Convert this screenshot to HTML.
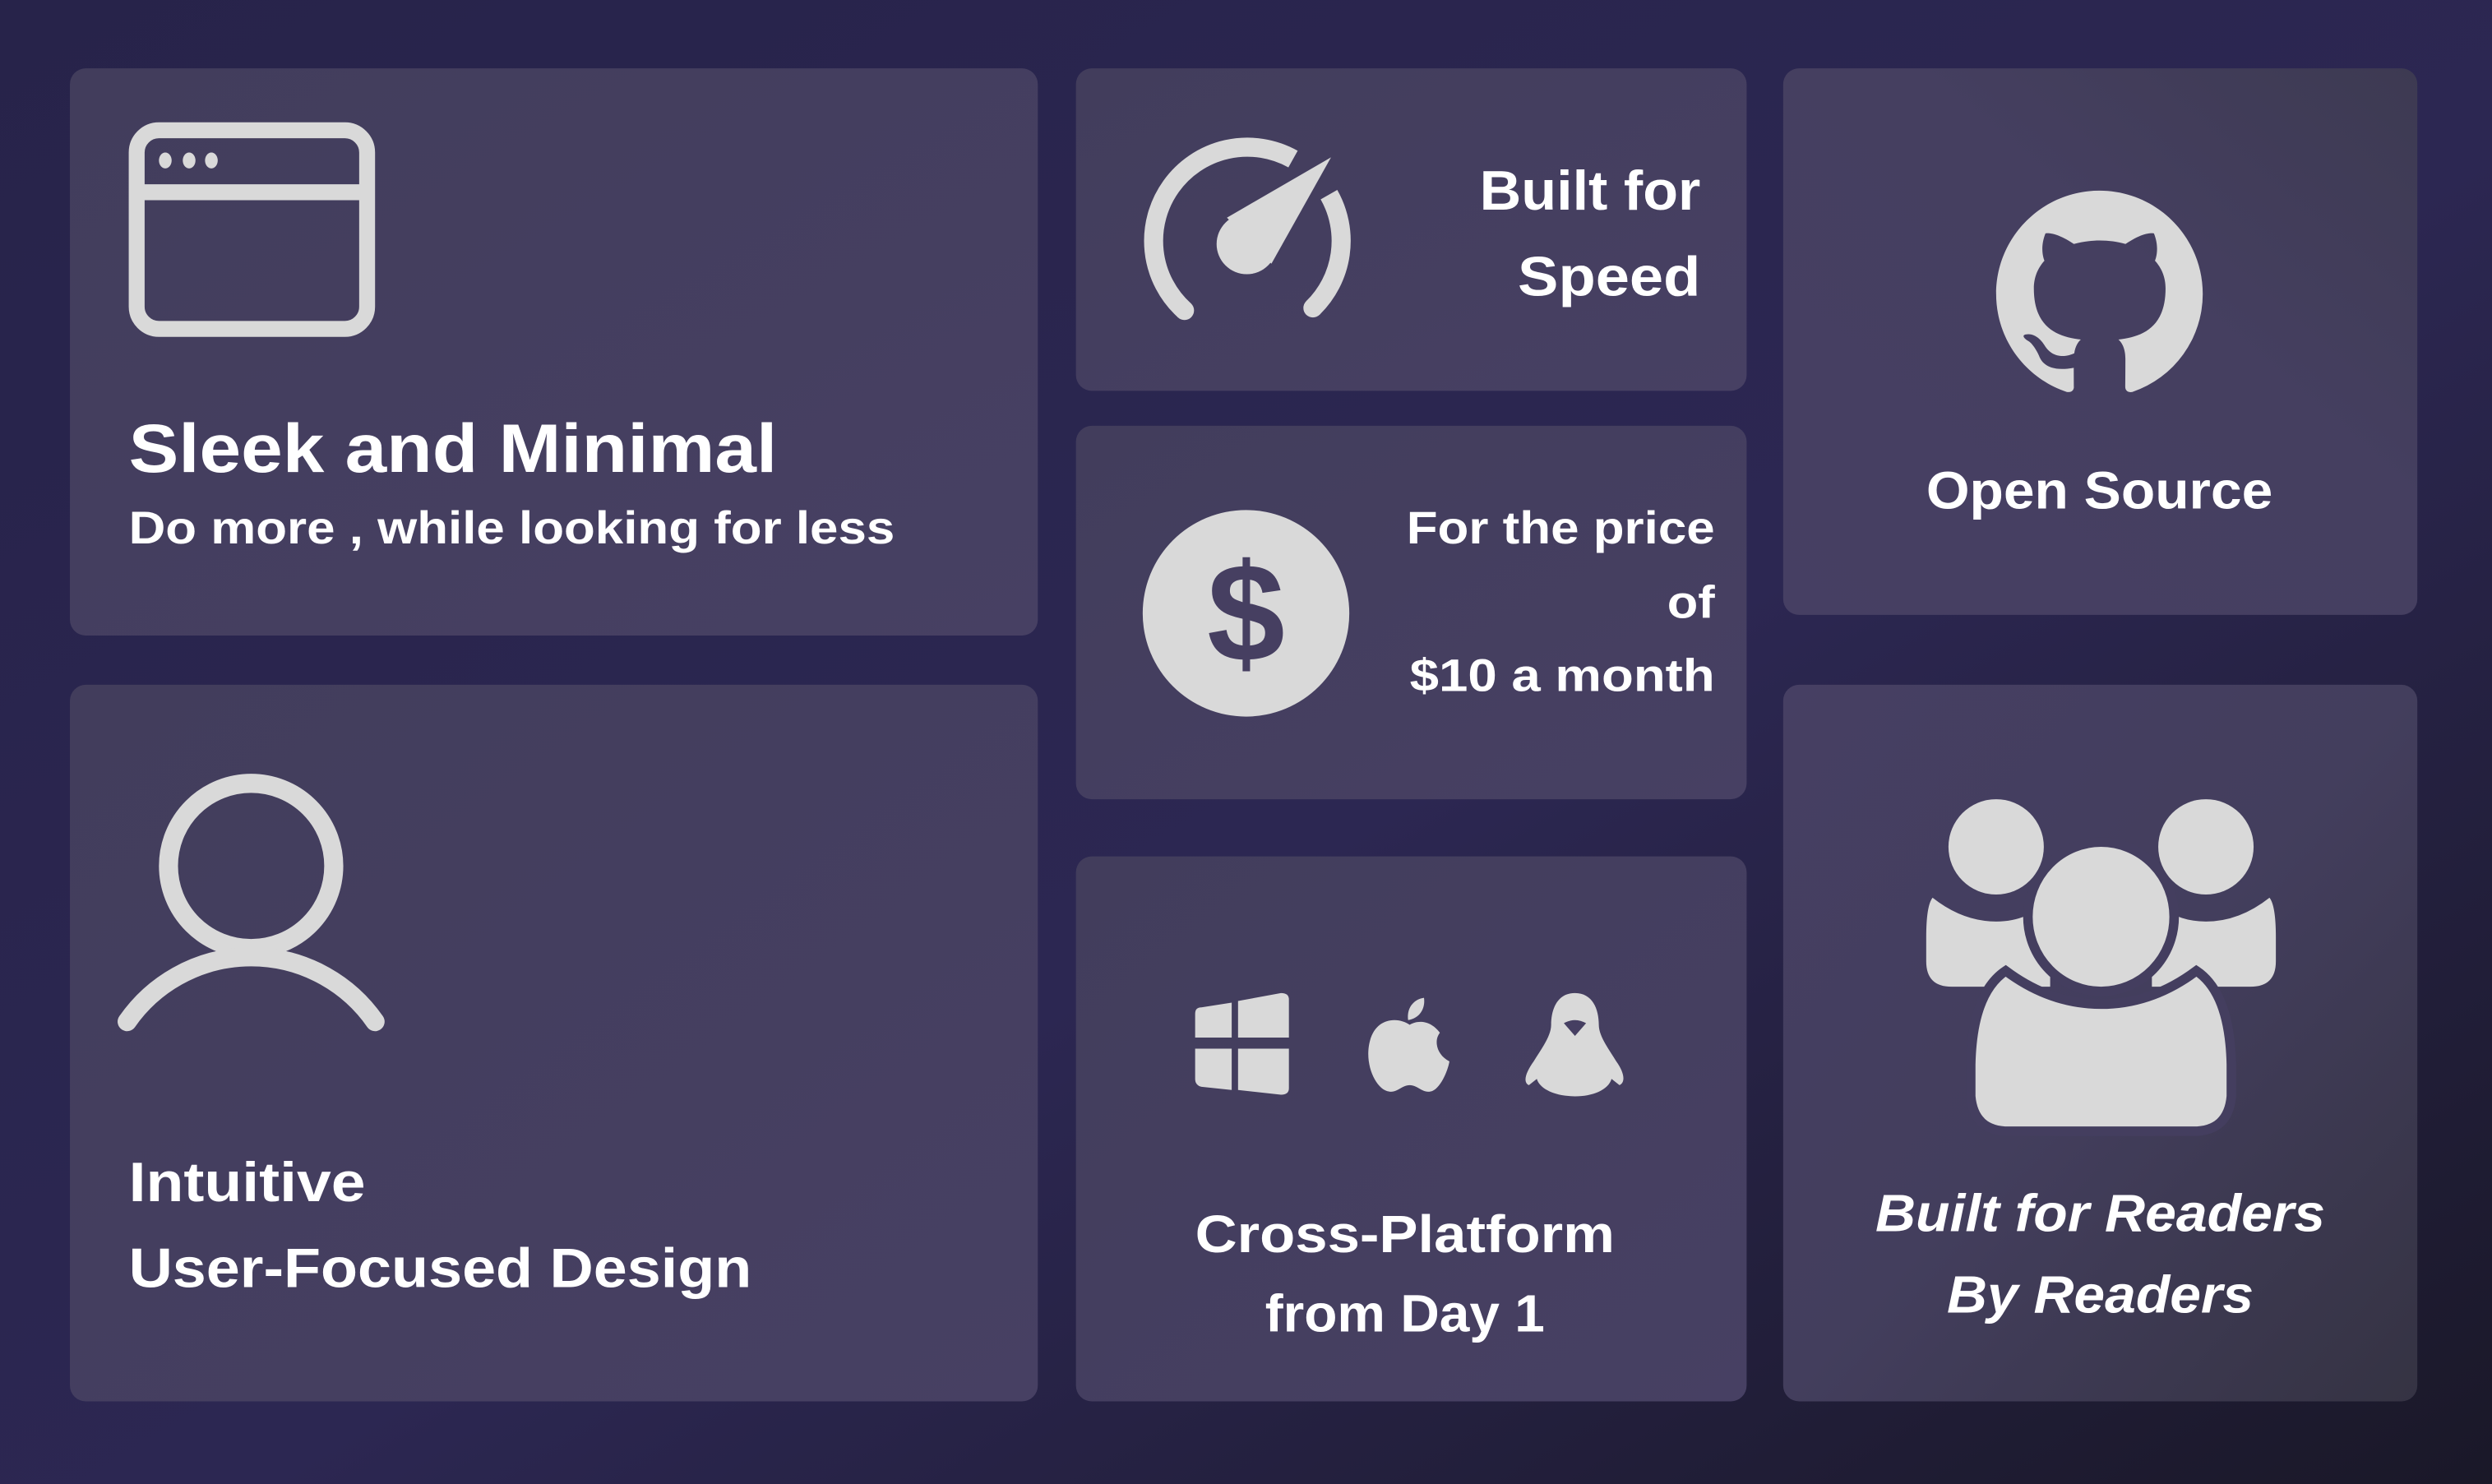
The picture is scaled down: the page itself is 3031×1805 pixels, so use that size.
<!DOCTYPE html>
<html><head><meta charset="utf-8"><style>
html,body{margin:0;padding:0;width:3031px;height:1805px;overflow:hidden;background:#2a2550}
svg{display:block}
text{font-family:"Liberation Sans",sans-serif;font-weight:bold;fill:#fff}
</style></head><body>
<svg width="3031" height="1805" viewBox="0 0 1568 934" preserveAspectRatio="none" xmlns="http://www.w3.org/2000/svg">
<defs>
<linearGradient id="bg" x1="0" y1="0" x2="1" y2="1">
<stop offset="0" stop-color="#27234a"/><stop offset="0.55" stop-color="#2c2752"/><stop offset="1" stop-color="#1a1828"/>
</linearGradient>
<linearGradient id="c" x1="0" y1="0" x2="1" y2="1">
<stop offset="0" stop-color="#423d5c"/><stop offset="1" stop-color="#474063"/>
</linearGradient>
<linearGradient id="c4" x1="0" y1="1" x2="1" y2="0">
<stop offset="0" stop-color="#463f63"/><stop offset="0.6" stop-color="#453f60"/><stop offset="1" stop-color="#3d3a52"/>
</linearGradient>
<linearGradient id="c7" x1="0" y1="0" x2="1" y2="1">
<stop offset="0" stop-color="#463f63"/><stop offset="0.5" stop-color="#433e5d"/><stop offset="1" stop-color="#353343"/>
</linearGradient>
</defs>
<rect width="1568" height="934" fill="url(#bg)"/>
<rect x="44" y="43" width="609" height="357" rx="10" fill="url(#c)"/>
<rect x="677" y="43" width="422" height="203" rx="10" fill="url(#c)"/>
<rect x="677" y="268" width="422" height="235" rx="10" fill="url(#c)"/>
<rect x="1122" y="43" width="399" height="344" rx="10" fill="url(#c4)"/>
<rect x="44" y="431" width="609" height="451" rx="10" fill="url(#c)"/>
<rect x="677" y="539" width="422" height="343" rx="10" fill="url(#c)"/>
<rect x="1122" y="431" width="399" height="451" rx="10" fill="url(#c7)"/>

<!-- browser icon -->
<g fill="none" stroke="#d9d9d9" stroke-width="10">
<rect x="86" y="82" width="145" height="125" rx="14"/>
<line x1="86" y1="121" x2="231" y2="121"/>
</g>
<g fill="#d9d9d9"><ellipse cx="104" cy="101" rx="4" ry="5"/><ellipse cx="119" cy="101" rx="4" ry="5"/><ellipse cx="133" cy="101" rx="4" ry="5"/></g>

<!-- speedometer -->
<g fill="none" stroke="#d9d9d9" stroke-width="12">
<path d="M745.3 195.4 A59 59 0 0 1 813.6 100.1"/>
<path d="M836.2 122.5 A59 59 0 0 1 826.1 193.8"/>
</g>
<g fill="#d9d9d9">
<circle cx="745.3" cy="195.4" r="6"/>
<circle cx="826.1" cy="193.8" r="6"/>
<circle cx="784.5" cy="153.6" r="19"/>
<path d="M772 137 L837.5 99 L800 166 Z"/>
</g>

<!-- dollar -->
<circle cx="784" cy="386" r="65" fill="#d9d9d9"/>
<text x="784" y="416" font-size="88" text-anchor="middle" style="fill:#463f61">$</text>

<!-- github -->
<g transform="translate(1256 120) scale(8.125)">
<path fill="#d9d9d9" fill-rule="evenodd" d="M8 0C3.58 0 0 3.58 0 8c0 3.54 2.29 6.53 5.47 7.590.4.07.55-.17.55-.38 0-.19-.01-.82-.01-1.49-2.01.37-2.53-.49-2.690-.94-.09-.23-.48-.94-.82-1.130-.28-.15-.68-.52-.01-.53.63-.01 1.08.58 1.23.82.72 1.21 1.870.87 2.33.66.07-.52.28-.87.51-1.07-1.78-.2-3.640-.89-3.640-3.95 0-.87.31-1.59.82-2.15-.08-.2-.36-1.02.08-2.12 0 0 .67-.21 2.2.82.64-.18 1.32-.27 2-.27.68 0 1.36.09 2 .27 1.53-1.04 2.2-.82 2.2-.82.44 1.1.16 1.92.08 2.12.51.56.82 1.27.82 2.15 0 3.07-1.87 3.75-3.65 3.95.29.25.54.73.54 1.48 0 1.07-.01 1.93-.01 2.2 0 .21.15.46.55.38A8.013 8.013 0 0016 8c0-4.42-3.58-8-8-8z"/>
</g>

<!-- user -->
<g fill="none" stroke="#d9d9d9" stroke-width="12" stroke-linecap="round">
<circle cx="158" cy="545" r="52"/>
<path d="M80 643 A95 95 0 0 1 236 643"/>
</g>

<!-- windows -->
<g fill="#d9d9d9">
<path d="M752 638 Q752 634 756 634 L775 631 L775 653 L752 653 Z"/>
<path d="M779 630 L806 625 Q811 625 811 629 L811 653 L779 653 Z"/>
<path d="M752 660 L775 660 L775 686 L756 684 Q752 683 752 679 Z"/>
<path d="M779 660 L811 660 L811 685 Q811 689 806 689 L779 686 Z"/>
</g>
<!-- apple -->
<g fill="#d9d9d9">
<path d="M887 645 C880 640 866 640 862 655 C858 670 866 686 874 687 C879 688 882 683 887 683 C892 683 895 688 900 687 C906 686 911 674 912 668 C904 664 902 655 906 650 C900 642 892 642 887 645 Z"/>
<path d="M886 642 C885 635 889 629 896 628 C897 635 893 641 886 642 Z"/>
</g>
<!-- penguin -->
<g>
<path fill="#d9d9d9" d="M991 625 C980 625 976 635 976 645 C976 652 970 660 965 668 C960 675 958 681 962 683 L967 679 C969 686 980 690 991 690 C1002 690 1012 686 1014 679 L1019 683 C1023 681 1022 675 1017 668 C1012 660 1006 652 1006 645 C1006 635 1002 625 991 625 Z"/>
<path fill="#463f62" d="M984 644 Q991 640 998 644 L991 652 Z"/>
</g>

<!-- readers group -->
<g fill="#d9d9d9" stroke="#443e5f" stroke-width="6">
<path d="M1216 565 Q1235 580 1256 580 Q1277 580 1290 565 L1290 621 L1228 621 Q1212 621 1212 605 L1212 590 Q1212 570 1216 565 Z" stroke="none"/>
<path d="M1428 565 Q1409 580 1388 580 Q1367 580 1354 565 L1354 621 L1416 621 Q1432 621 1432 605 L1432 590 Q1432 570 1428 565 Z" stroke="none"/>
<circle cx="1256" cy="533" r="30" stroke="none"/>
<circle cx="1388" cy="533" r="30" stroke="none"/>
<path d="M1262 611 Q1290 632 1322 632 Q1354 632 1382 611 Q1403 625 1404 670 L1404 690 Q1402 712 1380 712 L1264 712 Q1242 712 1240 690 L1240 670 Q1241 625 1262 611 Z"/>
<ellipse cx="1322" cy="577" rx="46" ry="47"/>
</g>

<!-- texts -->
<text x="81" y="297" font-size="43" textLength="408" lengthAdjust="spacingAndGlyphs">Sleek and Minimal</text>
<text x="81" y="342" font-size="29" textLength="482" lengthAdjust="spacingAndGlyphs">Do more , while looking for less</text>
<text x="1070" y="132" font-size="35" text-anchor="end" textLength="139" lengthAdjust="spacingAndGlyphs">Built for</text>
<text x="1070" y="186" font-size="35" text-anchor="end" textLength="115" lengthAdjust="spacingAndGlyphs">Speed</text>
<text x="1079" y="342" font-size="29" text-anchor="end" textLength="194" lengthAdjust="spacingAndGlyphs">For the price</text>
<text x="1079" y="389" font-size="29" text-anchor="end" textLength="30" lengthAdjust="spacingAndGlyphs">of</text>
<text x="1079" y="435" font-size="29" text-anchor="end" textLength="192" lengthAdjust="spacingAndGlyphs">$10 a month</text>
<text x="1212" y="320" font-size="33" textLength="218" lengthAdjust="spacingAndGlyphs">Open Source</text>
<text x="81" y="756" font-size="35" textLength="149" lengthAdjust="spacingAndGlyphs">Intuitive</text>
<text x="81" y="810" font-size="35" textLength="392" lengthAdjust="spacingAndGlyphs">User-Focused Design</text>
<text x="752" y="788" font-size="33" textLength="264" lengthAdjust="spacingAndGlyphs">Cross-Platform</text>
<text x="796" y="838" font-size="33" textLength="176" lengthAdjust="spacingAndGlyphs">from Day 1</text>
<text x="1180" y="775" font-size="33" font-style="italic" textLength="283" lengthAdjust="spacingAndGlyphs">Built for Readers</text>
<text x="1225" y="826" font-size="33" font-style="italic" textLength="193" lengthAdjust="spacingAndGlyphs">By Readers</text>
</svg>
</body></html>
